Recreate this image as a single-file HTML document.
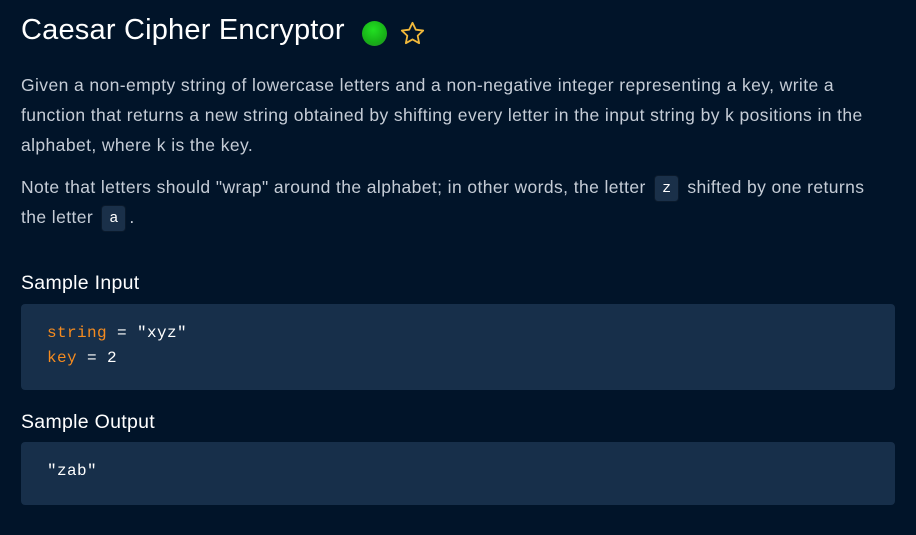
<!DOCTYPE html>
<html><head><meta charset="utf-8"><style>
html,body{margin:0;padding:0;background:#011429;width:916px;height:535px;overflow:hidden}
body{font-family:"Liberation Sans",sans-serif;color:#c5ccd6;position:relative}
.abs{position:absolute;white-space:nowrap}
h1{position:absolute;left:21px;top:14px;margin:0;font-size:29px;font-weight:normal;color:#fff;letter-spacing:0.2px}
.p{position:absolute;left:21px;font-size:17.5px;letter-spacing:0.4px;line-height:30px;white-space:nowrap}
code{display:inline-block;font-family:"Liberation Mono",monospace;font-size:15px;letter-spacing:0;color:#fff;background:#1a3049;border:1px solid #0a1a2c;border-radius:4px;padding:0 7px;line-height:25px;margin:0 3px;vertical-align:1px}
.h2{position:absolute;left:21px;font-size:19.5px;letter-spacing:0.3px;color:#fff}
.box{position:absolute;left:21px;width:874px;background:#172f4a;border-radius:4px}
.mono{position:absolute;left:47px;font-family:"Liberation Mono",monospace;font-size:16px;letter-spacing:0.4px;color:#fff;white-space:pre;line-height:25px}
.k{color:#f58b1f}
</style></head><body>
<h1>Caesar Cipher Encryptor</h1>
<div class="abs" style="left:362px;top:21px;width:25px;height:25px;border-radius:50%;background:radial-gradient(circle at 45% 35%,#22e022,#17b017 60%,#2a8a2a)"></div>
<svg class="abs" style="left:399px;top:20px" width="27" height="27" viewBox="0 0 24 24"><path d="M12 2.5l2.9 6.1 6.6.8-4.9 4.6 1.3 6.6L12 17.3l-5.9 3.3 1.3-6.6-4.9-4.6 6.6-.8z" fill="none" stroke="#f2b93b" stroke-width="1.6" stroke-linejoin="round"/></svg>
<div class="p" style="top:70px">Given a non-empty string of lowercase letters and a non-negative integer representing a key, write a<br>function that returns a new string obtained by shifting every letter in the input string by k positions in the<br>alphabet, where k is the key.</div>
<div class="p" style="top:172px">Note that letters should "wrap" around the alphabet; in other words, the letter <code>z</code> shifted by one returns<br>the letter <code>a</code>.</div>
<div class="h2" style="top:272px">Sample Input</div>
<div class="box" style="top:304px;height:86px"></div>
<div class="mono" style="top:321px"><span class="k">string</span> = "xyz"
<span class="k">key</span> = 2</div>
<div class="h2" style="top:411px">Sample Output</div>
<div class="box" style="top:442px;height:63px"></div>
<div class="mono" style="top:459px">"zab"</div>
</body></html>
